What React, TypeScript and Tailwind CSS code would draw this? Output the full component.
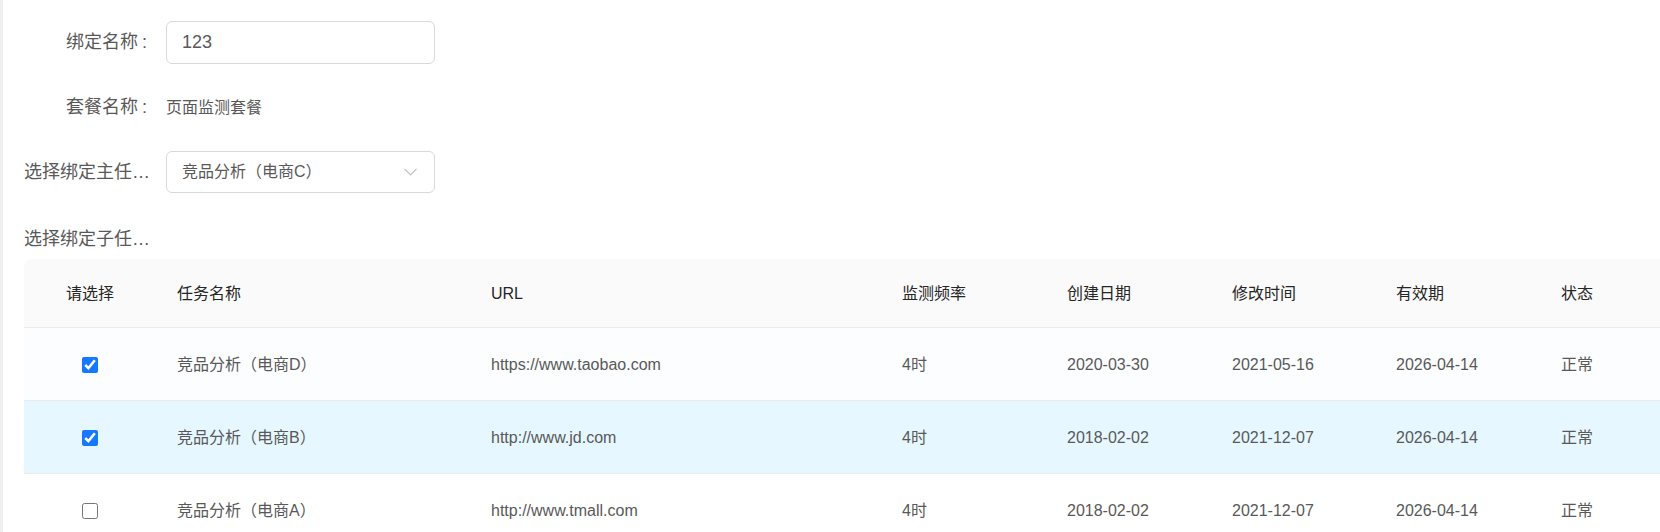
import { useState } from "react";

const rows = [
  {
    id: 1,
    name: "竞品分析（电商D）",
    url: "https://www.taobao.com",
    freq: "4时",
    created: "2020-03-30",
    modified: "2021-05-16",
    expire: "2026-04-14",
    status: "正常",
    bg: "bg-[#fcfdfe]",
  },
  {
    id: 2,
    name: "竞品分析（电商B）",
    url: "http://www.jd.com",
    freq: "4时",
    created: "2018-02-02",
    modified: "2021-12-07",
    expire: "2026-04-14",
    status: "正常",
    bg: "bg-[#e6f7ff]",
  },
  {
    id: 3,
    name: "竞品分析（电商A）",
    url: "http://www.tmall.com",
    freq: "4时",
    created: "2018-02-02",
    modified: "2021-12-07",
    expire: "2026-04-14",
    status: "正常",
    bg: "bg-white",
  },
];

const cols =
  "grid grid-cols-[137px_314px_411px_165px_165px_164px_165px_1fr]";

const App = () => {
  const [name, setName] = useState("123");
  const [checked, setChecked] = useState<Record<number, boolean>>({
    1: true,
    2: true,
    3: false,
  });

  return (
    <div className="flex h-[532px] w-full overflow-hidden bg-white text-[#595959] [font-family:'Liberation_Sans','Noto_Sans_CJK_SC',sans-serif]">
      <div className="w-[3px] shrink-0 bg-[#f0f0f0]" />
      <div className="flex-1 pl-[21px] pt-[21px]">
        {/* 绑定名称 */}
        <div className="flex h-[43px] items-center">
          <div className="flex w-[132px] shrink-0 justify-end text-[18px]">
            <span>绑定名称</span>
            <span className="ml-[4px] mr-[9px]">:</span>
          </div>
          <input
            className="ml-[10px] h-[43px] w-[269px] rounded-[6px] border border-[#d9d9d9] pl-[15px] text-[18px] text-[#595959] outline-none"
            value={name}
            onChange={(e) => setName(e.target.value)}
          />
        </div>

        {/* 套餐名称 */}
        <div className="mt-[22px] flex h-[43px] items-center">
          <div className="flex w-[132px] shrink-0 justify-end text-[18px]">
            <span>套餐名称</span>
            <span className="ml-[4px] mr-[9px]">:</span>
          </div>
          <div className="ml-[10px] text-[16px]">页面监测套餐</div>
        </div>

        {/* 主任务 */}
        <div className="mt-[22px] flex h-[42px] items-center">
          <div className="w-[132px] shrink-0 truncate text-[18px]">
            选择绑定主任务：
          </div>
          <div className="ml-[10px] flex h-[42px] w-[269px] items-center justify-between rounded-[6px] border border-[#d9d9d9] pl-[15px] pr-[17px]">
            <span className="text-[16px]">竞品分析（电商C）</span>
            <svg width="13" height="8" viewBox="0 0 13 8" fill="none">
              <polyline
                points="0.5,0.8 6.5,7 12.5,0.8"
                stroke="#bfbfbf"
                strokeWidth="1.2"
              />
            </svg>
          </div>
        </div>

        {/* 子任务 */}
        <div className="mt-[35px] h-[22px] w-[132px] truncate text-[18px] leading-[22px]">
          选择绑定子任务：
        </div>

        {/* table */}
        <div className="mt-[9px] text-[16px]">
          <div
            className={`${cols} h-[69px] items-center rounded-tl-[8px] border-b border-[#ebebeb] bg-[#fafafa] pt-[2px] text-[#262626]`}
          >
            <div className="flex justify-center pr-[5px]">请选择</div>
            <div className="pl-[16px]">任务名称</div>
            <div className="pl-[16px]">URL</div>
            <div className="pl-[16px]">监测频率</div>
            <div className="pl-[16px]">创建日期</div>
            <div className="pl-[16px]">修改时间</div>
            <div className="pl-[16px]">有效期</div>
            <div className="pl-[16px]">状态</div>
          </div>
          {rows.map((r) => (
            <div
              key={r.id}
              className={`${cols} h-[73px] items-center border-b border-[#ebebeb] pt-[2px] ${r.bg}`}
            >
              <div className="flex justify-center pr-[5px]">
                <input
                  type="checkbox"
                  className="h-4 w-4 accent-[#1677ff]"
                  checked={checked[r.id]}
                  onChange={() =>
                    setChecked((prev) => ({ ...prev, [r.id]: !prev[r.id] }))
                  }
                />
              </div>
              <div className="pl-[16px]">{r.name}</div>
              <div className="pl-[16px]">{r.url}</div>
              <div className="pl-[16px]">{r.freq}</div>
              <div className="pl-[16px]">{r.created}</div>
              <div className="pl-[16px]">{r.modified}</div>
              <div className="pl-[16px]">{r.expire}</div>
              <div className="pl-[16px]">{r.status}</div>
            </div>
          ))}
        </div>
      </div>
    </div>
  );
};

export default App;
